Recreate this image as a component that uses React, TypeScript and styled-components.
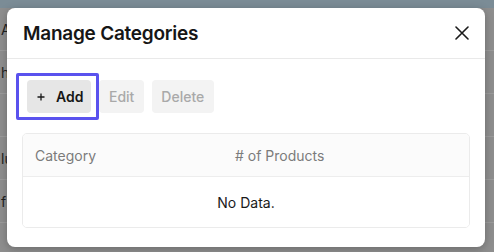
import styled, { createGlobalStyle } from "styled-components";

const GlobalStyle = createGlobalStyle`
  html, body {
    margin: 0;
    padding: 0;
    background: #8e8e8e;
  }
  body {
    font-family: Inter, "Liberation Sans", sans-serif;
  }
`;

const backRows = ["A", "hi", "", "lu", "f", ""];

export default function App() {
  return (
    <>
      <GlobalStyle />
      <Page>
        <TopBar />
        <BackList>
          {backRows.map((t, i) => (
            <BackRow key={i}>{t}</BackRow>
          ))}
        </BackList>
        <Modal>
          <Header>
            <Title>Manage Categories</Title>
            <CloseButton aria-label="close">
              <svg width="14" height="14" viewBox="0 0 14 14">
                <path d="M1 1L13 13M13 1L1 13" stroke="#1a1a1a" strokeWidth="1.6" strokeLinecap="round" />
              </svg>
            </CloseButton>
          </Header>
          <Body>
            <Toolbar>
              <ActionButton $primary $focused>
                <svg width="12" height="12" viewBox="0 0 12 12">
                  <path d="M6 2.5V9.5M2.5 6H9.5" stroke="#1a1a1a" strokeWidth="1.3" />
                </svg>
                Add
              </ActionButton>
              <ActionButton disabled>Edit</ActionButton>
              <ActionButton disabled>Delete</ActionButton>
            </Toolbar>
            <Table>
              <HeadRow>
                <HeadCell $first>Category</HeadCell>
                <HeadCell># of Products</HeadCell>
              </HeadRow>
              <EmptyRow>No Data.</EmptyRow>
            </Table>
          </Body>
        </Modal>
      </Page>
    </>
  );
}

const Page = styled.div`
  position: relative;
  width: 494px;
  height: 252px;
  overflow: hidden;
  background: #8e8e8e;
`;

const TopBar = styled.div`
  height: 8px;
  background: #7b8c96;
`;

const BackList = styled.div`
  display: flex;
  flex-direction: column;
`;

const BackRow = styled.div`
  height: 42px;
  border-bottom: 1px solid #9b9b9b;
  display: flex;
  align-items: center;
  padding-left: 1px;
  font-size: 14px;
  color: #1f1f1f;
`;

const Modal = styled.div`
  position: absolute;
  top: 8px;
  left: 7px;
  width: 478px;
  height: 239px;
  background: #fff;
  border-radius: 8px;
  box-shadow: 0 2px 8px rgba(0, 0, 0, 0.25);
  display: flex;
  flex-direction: column;
`;

const Header = styled.div`
  height: 50px;
  display: flex;
  align-items: center;
  justify-content: space-between;
  padding: 0 16px 0 16px;
  border-bottom: 1px solid #e9e9e9;
`;

const Title = styled.h2`
  margin: 0;
  font-size: 19px;
  font-weight: 600;
  letter-spacing: -0.25px;
  color: #161616;
  line-height: 1;
`;

const CloseButton = styled.button`
  border: 0;
  background: none;
  padding: 0;
  display: flex;
  cursor: pointer;
`;

const Body = styled.div`
  padding: 21px 15px 0 15px;
  display: flex;
  flex-direction: column;
  gap: 20px;
`;

const Toolbar = styled.div`
  display: flex;
  gap: 8px;
  padding-left: 5px;
`;

const ActionButton = styled.button<{ $primary?: boolean; $focused?: boolean }>`
  position: relative;
  height: 33px;
  border: 0;
  border-radius: 4px;
  padding: 0 ${(p) => (p.$primary ? "8px" : "9.5px")};
  display: flex;
  align-items: center;
  gap: 9px;
  font-family: Inter, "Liberation Sans", sans-serif;
  font-size: 14px;
  font-weight: ${(p) => (p.$primary ? 600 : 500)};
  color: ${(p) => (p.$primary ? "#161616" : "#a9a9a9")};
  background: ${(p) => (p.$primary ? "#e6e6e6" : "#f3f3f3")};

  ${(p) =>
    p.$focused &&
    `
    &::after {
      content: "";
      position: absolute;
      top: -7px;
      bottom: -7px;
      left: -11px;
      right: -8px;
      border: 3.5px solid #5a52ee;
      border-radius: 2px;
    }
  `}
`;

const Table = styled.div`
  border: 1px solid #ebebeb;
  border-radius: 5px;
  overflow: hidden;
`;

const HeadRow = styled.div`
  display: flex;
  height: 42px;
  align-items: center;
  background: #fbfbfb;
  border-bottom: 1px solid #ededed;
`;

const HeadCell = styled.div<{ $first?: boolean }>`
  width: ${(p) => (p.$first ? "200px" : "auto")};
  padding-left: ${(p) => (p.$first ? "12px" : "0")};
  font-size: 14px;
  color: #7b7b7b;
`;

const EmptyRow = styled.div`
  height: 50px;
  display: flex;
  align-items: center;
  justify-content: center;
  font-size: 14px;
  color: #1a1a1a;
  background: #fff;
`;
